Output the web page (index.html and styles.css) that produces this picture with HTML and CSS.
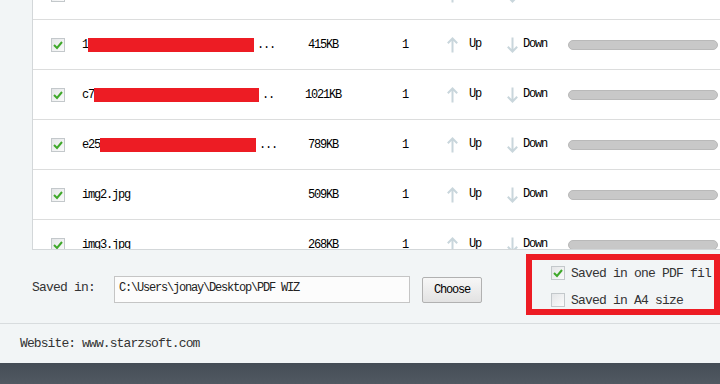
FILE: index.html
```html
<!DOCTYPE html>
<html lang="en">
<head>
    <meta charset="UTF-8">
    <meta name="viewport" content="width=device-width, initial-scale=1.0">
    <title>PDF WIZ</title>
    <link rel="stylesheet" href="styles.css">
</head>
<body>
    <div class="app">
        <div class="main">
            <div class="gutter"></div>
            <div class="list">
                <div class="rows">
                    <div class="row">
                        <span class="check on"><svg width="12" height="12" viewBox="0 0 12 12"><path d="M2 6 L5 9 L10 3"/></svg></span>
                        <span class="name"></span>
                        <span class="size"></span>
                        <span class="count"></span>
                        <span class="move"><svg class="arrow" width="11" height="16" viewBox="0 0 11 16"><path d="M5.5 15.5 V1.5 M0.8 6.2 L5.5 1.5 L10.2 6.2"/></svg></span>
                        <span class="move"><svg class="arrow" width="11" height="16" viewBox="0 0 11 16"><path d="M5.5 0.5 V14.5 M0.8 9.8 L5.5 14.5 L10.2 9.8"/></svg></span>
                        <span class="bar"></span>
                    </div>
                    <div class="row">
                        <span class="check on"><svg width="12" height="12" viewBox="0 0 12 12"><path d="M2 6 L5 9 L10 3"/></svg></span>
                        <span class="name">1<span class="redact r1"></span>...</span>
                        <span class="size">415KB</span>
                        <span class="count">1</span>
                        <span class="move"><svg class="arrow" width="11" height="16" viewBox="0 0 11 16"><path d="M5.5 15.5 V1.5 M0.8 6.2 L5.5 1.5 L10.2 6.2"/></svg><span class="move-label up">Up</span></span>
                        <span class="move"><svg class="arrow" width="11" height="16" viewBox="0 0 11 16"><path d="M5.5 0.5 V14.5 M0.8 9.8 L5.5 14.5 L10.2 9.8"/></svg><span class="move-label">Down</span></span>
                        <span class="bar"></span>
                    </div>
                    <div class="row">
                        <span class="check on"><svg width="12" height="12" viewBox="0 0 12 12"><path d="M2 6 L5 9 L10 3"/></svg></span>
                        <span class="name">c7<span class="redact r2"></span>..</span>
                        <span class="size">1021KB</span>
                        <span class="count">1</span>
                        <span class="move"><svg class="arrow" width="11" height="16" viewBox="0 0 11 16"><path d="M5.5 15.5 V1.5 M0.8 6.2 L5.5 1.5 L10.2 6.2"/></svg><span class="move-label up">Up</span></span>
                        <span class="move"><svg class="arrow" width="11" height="16" viewBox="0 0 11 16"><path d="M5.5 0.5 V14.5 M0.8 9.8 L5.5 14.5 L10.2 9.8"/></svg><span class="move-label">Down</span></span>
                        <span class="bar"></span>
                    </div>
                    <div class="row">
                        <span class="check on"><svg width="12" height="12" viewBox="0 0 12 12"><path d="M2 6 L5 9 L10 3"/></svg></span>
                        <span class="name">e25<span class="redact r3"></span>...</span>
                        <span class="size">789KB</span>
                        <span class="count">1</span>
                        <span class="move"><svg class="arrow" width="11" height="16" viewBox="0 0 11 16"><path d="M5.5 15.5 V1.5 M0.8 6.2 L5.5 1.5 L10.2 6.2"/></svg><span class="move-label up">Up</span></span>
                        <span class="move"><svg class="arrow" width="11" height="16" viewBox="0 0 11 16"><path d="M5.5 0.5 V14.5 M0.8 9.8 L5.5 14.5 L10.2 9.8"/></svg><span class="move-label">Down</span></span>
                        <span class="bar"></span>
                    </div>
                    <div class="row">
                        <span class="check on"><svg width="12" height="12" viewBox="0 0 12 12"><path d="M2 6 L5 9 L10 3"/></svg></span>
                        <span class="name">img2.jpg</span>
                        <span class="size">509KB</span>
                        <span class="count">1</span>
                        <span class="move"><svg class="arrow" width="11" height="16" viewBox="0 0 11 16"><path d="M5.5 15.5 V1.5 M0.8 6.2 L5.5 1.5 L10.2 6.2"/></svg><span class="move-label up">Up</span></span>
                        <span class="move"><svg class="arrow" width="11" height="16" viewBox="0 0 11 16"><path d="M5.5 0.5 V14.5 M0.8 9.8 L5.5 14.5 L10.2 9.8"/></svg><span class="move-label">Down</span></span>
                        <span class="bar"></span>
                    </div>
                    <div class="row">
                        <span class="check on"><svg width="12" height="12" viewBox="0 0 12 12"><path d="M2 6 L5 9 L10 3"/></svg></span>
                        <span class="name">img3.jpg</span>
                        <span class="size">268KB</span>
                        <span class="count">1</span>
                        <span class="move"><svg class="arrow" width="11" height="16" viewBox="0 0 11 16"><path d="M5.5 15.5 V1.5 M0.8 6.2 L5.5 1.5 L10.2 6.2"/></svg><span class="move-label up">Up</span></span>
                        <span class="move"><svg class="arrow" width="11" height="16" viewBox="0 0 11 16"><path d="M5.5 0.5 V14.5 M0.8 9.8 L5.5 14.5 L10.2 9.8"/></svg><span class="move-label">Down</span></span>
                        <span class="bar"></span>
                    </div>
                </div>
            </div>
        </div>

        <div class="controls">
            <label class="saved-label" for="path">Saved in:</label>
            <input class="path" type="text" id="path" value="C:\Users\jonay\Desktop\PDF WIZ" readonly>
            <button class="choose">Choose</button>
            <div class="options">
                <div class="option">
                    <span class="check on"><svg width="12" height="12" viewBox="0 0 12 12"><path d="M2 6 L5 9 L10 3"/></svg></span>
                    <span class="option-text">Saved in one PDF fil</span>
                </div>
                <div class="option">
                    <span class="check"></span>
                    <span class="option-text">Saved in A4 size</span>
                </div>
            </div>
        </div>

        <div class="footer">Website: www.starzsoft.com</div>
        <div class="taskbar"></div>
    </div>
</body>
</html>
```

FILE: styles.css
```css
body {
    margin: 0;
    background-color: #f2f5f6;
    font-family: "Liberation Mono", "Courier New", monospace;
    color: #000;
    overflow: hidden;
}
.app {
    width: 720px;
    height: 384px;
    display: flex;
    flex-direction: column;
}
.main {
    height: 250px;
    display: flex;
}
.gutter {
    width: 32px;
    flex-shrink: 0;
}
.list {
    flex: 1;
    background-color: #fff;
    border-left: 1px solid #d3d7d9;
    border-bottom: 1px solid #d3d7d9;
    overflow: hidden;
}
.rows {
    margin-top: -30px;
}
.row {
    height: 49px;
    border-bottom: 1px solid #dcdddd;
    padding-left: 18px;
    display: grid;
    grid-template-columns: 31px 208px 66px 91px 60px 61px 150px;
    align-items: center;
    font-size: 12px;
    letter-spacing: -1.2px;
}
.check {
    width: 14px;
    height: 14px;
    box-sizing: border-box;
    border: 1px solid #c3c8cb;
    background: linear-gradient(135deg, #e4e6e8, #fbfbfb);
    display: flex;
    align-items: center;
    justify-content: center;
}
.check svg path {
    fill: none;
    stroke: #3fa82a;
    stroke-width: 2;
}
.name {
    white-space: nowrap;
    display: flex;
    align-items: center;
}
.redact {
    display: inline-block;
    height: 14px;
    background-color: #ed1c24;
}
.r1 {
    width: 166px;
    margin-right: 3px;
}
.r2 {
    width: 165px;
    margin-right: 3px;
}
.r3 {
    width: 156px;
    margin-right: 3px;
}
.size {
    text-align: center;
}
.count {
    padding-left: 46px;
}
.move {
    display: flex;
    align-items: center;
}
.arrow path {
    fill: none;
    stroke: #c9d6dc;
    stroke-width: 2;
}
.move-label {
    margin-left: 5px;
    margin-bottom: 1px;
}
.move-label.up {
    margin-left: 11px;
}
.bar {
    height: 10px;
    box-sizing: border-box;
    border: 1px solid #b9b9b9;
    border-radius: 5px;
    background-color: #c8c8c8;
}
.controls {
    height: 73px;
    border-bottom: 1px solid #d8dcde;
    display: flex;
    align-items: flex-start;
    color: #333;
}
.saved-label {
    margin: 31px 0 0 32px;
    width: 82px;
    font-size: 13px;
    letter-spacing: -0.8px;
    line-height: 14px;
}
.path {
    margin-top: 26px;
    width: 296px;
    height: 27px;
    box-sizing: border-box;
    border: 1px solid #c5c5c5;
    background-color: #fcfcfc;
    padding: 0 4px 3px;
    font-family: "Liberation Mono", "Courier New", monospace;
    font-size: 12px;
    letter-spacing: -1.2px;
    color: #222;
    outline: none;
}
.choose {
    margin: 27px 0 0 12px;
    width: 60px;
    height: 26px;
    border: 1px solid #b1b1b1;
    border-radius: 2px;
    background: linear-gradient(#f7f7f7, #e2e2e2);
    font-family: "Liberation Mono", "Courier New", monospace;
    font-size: 12px;
    letter-spacing: -1.2px;
    color: #000;
    padding: 0;
    cursor: pointer;
}
.options {
    margin: 4px 0 0 auto;
    width: 194px;
    height: 61px;
    box-sizing: border-box;
    border: 6px solid #ed1c24;
    padding: 6px 3px 0 19px;
    display: flex;
    flex-direction: column;
    gap: 13px;
}
.option {
    height: 14px;
    display: flex;
    align-items: center;
    gap: 6px;
    white-space: nowrap;
}
.option .check {
    flex-shrink: 0;
}
.option-text {
    font-size: 13px;
    letter-spacing: -0.8px;
}
.footer {
    height: 39px;
    display: flex;
    align-items: center;
    padding-left: 20px;
    font-size: 13px;
    letter-spacing: -0.9px;
    color: #333;
}
.taskbar {
    flex: 1;
    background: linear-gradient(#454d56, #515962);
}
```
